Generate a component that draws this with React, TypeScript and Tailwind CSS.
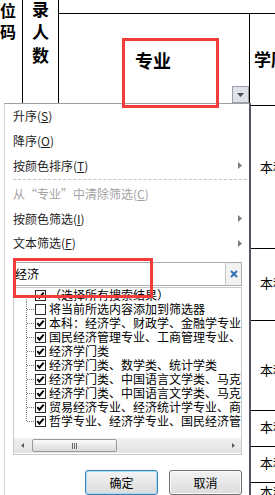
const FONT = "font-['Noto_Sans_CJK_SC','Microsoft_YaHei',sans-serif]"

type Row = { text: string; checked: boolean }

const ROWS: Row[] = [
  { text: '（选择所有搜索结果）', checked: true },
  { text: '将当前所选内容添加到筛选器', checked: false },
  { text: '本科：经济学、财政学、金融学专业、国际经济与贸易专业', checked: true },
  { text: '国民经济管理专业、工商管理专业、会计学专业', checked: true },
  { text: '经济学门类', checked: true },
  { text: '经济学门类、数学类、统计学类', checked: true },
  { text: '经济学门类、中国语言文学类、马克思主义理论类', checked: true },
  { text: '经济学门类、中国语言文学类、马克思主义理论类、法学类', checked: true },
  { text: '贸易经济专业、经济统计学专业、商务经济学专业', checked: true },
  { text: '哲学专业、经济学专业、国民经济管理专业', checked: true },
]

function SubArrow() {
  return (
    <svg width="4" height="7" viewBox="0 0 4 7">
      <path d="M0 0 L4 3.5 L0 7 Z" fill="#7d7d7d" />
    </svg>
  )
}

function CheckBox({ checked }: { checked: boolean }) {
  return (
    <svg width="11" height="11" viewBox="0 0 11 11" className="shrink-0">
      <rect x="0.5" y="0.5" width="10" height="10" fill="white" stroke="#2a2a2a" />
      {checked && <path d="M2.3 5.2 L4.4 7.6 L8.7 2.6" stroke="#000" strokeWidth={2} fill="none" />}
    </svg>
  )
}

function TreeLine({ first, last }: { first: boolean; last: boolean }) {
  return (
    <svg width="21" height="14" viewBox="0 0 21 14" className="shrink-0">
      <line x1="12.5" y1={first ? 7 : 0} x2="12.5" y2={last ? 7.5 : 14} stroke="#7f7f7f" strokeDasharray="1 1" />
      <line x1="13" y1="7.5" x2="21" y2="7.5" stroke="#7f7f7f" strokeDasharray="1 1" />
    </svg>
  )
}

function MenuItem({ children, arrow, disabled, h = 'h-[25px]' }: { children: React.ReactNode; arrow?: boolean; disabled?: boolean; h?: string }) {
  return (
    <div className={`${h} flex items-center justify-between pl-[8px] pr-[7px] text-[12px] whitespace-nowrap ${disabled ? 'text-[#a3a3a3]' : 'text-[#1e1e1e]'}`}>
      <span>{children}</span>
      {arrow && <SubArrow />}
    </div>
  )
}

export default function App() {
  return (
    <div className={`relative w-[275px] h-[495px] overflow-hidden bg-white text-black ${FONT}`}>
      {/* sheet */}
      <div className="flex h-full">
        <div className="w-[23px] shrink-0 border-r border-black flex flex-col text-[16px] font-bold leading-[21px]">
          <span>位</span>
          <span>码</span>
        </div>
        <div className="w-[36px] shrink-0 border-r border-black flex flex-col items-center text-[17px] font-bold leading-[23px] mt-[-3px]">
          <span>录</span>
          <span>人</span>
          <span>数</span>
        </div>
        <div className="flex-1 flex flex-col min-w-0">
          <div className="h-[14px] shrink-0 border-b border-black" />
          <div className="flex flex-1">
            <div className="w-[191px] shrink-0 border-r border-black flex flex-col">
              <div className="pl-[76px] pt-[34px] text-[18px] font-bold leading-[24px]">专业</div>
              <div className="self-end mt-[14px] w-[17px] h-[17px] border border-[#9aa1ab] bg-[#dfe3e8] flex items-center justify-center">
                <svg width="7" height="4" viewBox="0 0 7 4">
                  <path d="M0 0 L7 0 L3.5 4 Z" fill="#4a4f57" />
                </svg>
              </div>
            </div>
            <div className="flex-1 flex flex-col min-w-0 whitespace-nowrap overflow-hidden">
              <div className="h-[92px] shrink-0 border-b border-black pl-[4px] pt-[33px] text-[17px] font-bold leading-[24px]">学历</div>
              <div className="h-[143px] shrink-0 border-b border-black pl-[10px] pt-[53px] text-[13px] leading-[16px]">本科</div>
              <div className="h-[72px] shrink-0 border-b border-black pl-[10px] pt-[26px] text-[13px] leading-[16px]">本科</div>
              <div className="h-[90px] shrink-0 border-b border-black pl-[10px] pt-[41px] text-[13px] leading-[16px]">本科</div>
              <div className="h-[36px] shrink-0 border-b border-black pl-[10px] pt-[8px] text-[13px] leading-[16px]">本科</div>
              <div className="h-[36px] shrink-0 border-b border-black pl-[10px] pt-[8px] text-[13px] leading-[16px]">本科</div>
              <div className="pl-[10px] pt-[1px] text-[13px] leading-[16px]">本科</div>
            </div>
          </div>
        </div>
      </div>

      {/* filter dropdown */}
      <div className="absolute left-[4px] top-[103px] w-[247px] bottom-0 bg-white border-t border-t-[#a0a0a0] border-l border-l-[#d4d4d4] border-r-2 border-r-[#55556a] flex flex-col">
        <MenuItem>升序(<u>S</u>)</MenuItem>
        <MenuItem>降序(<u>O</u>)</MenuItem>
        <MenuItem arrow>按颜色排序(<u>T</u>)</MenuItem>
        <div className="h-[3px] flex items-center ml-[8px] mr-[2px]">
          <div className="w-full border-t border-dashed border-[#c4c4c4]" />
        </div>
        <MenuItem disabled h="h-[26px]">从“专业”中清除筛选(<u>C</u>)</MenuItem>
        <MenuItem arrow>按颜色筛选(<u>I</u>)</MenuItem>
        <MenuItem arrow>文本筛选(<u>F</u>)</MenuItem>

        {/* search */}
        <div className="mt-[6px] ml-[8px] w-[229px] h-[25px] border border-[#abadb3] flex">
          <div className="flex-1 pl-[1px] flex items-center text-[12px]">经济</div>
          <div className="w-[16px] border-l border-[#c8c8c8] bg-[#f2f2f2] flex items-center justify-center">
            <svg width="8" height="8" viewBox="0 0 8 8">
              <path d="M1 1 L7 7 M7 1 L1 7" stroke="#2f6db5" strokeWidth={1.8} />
            </svg>
          </div>
        </div>

        {/* list */}
        <div className="mt-[1px] ml-[8px] w-[229px] h-[170px] border border-[#c9c9c9] flex flex-col">
          <div className="flex-1 overflow-hidden">
            {ROWS.map((r, i) => (
              <div key={i} className="h-[14px] flex items-center whitespace-nowrap text-[12px] leading-[14px]">
                <TreeLine first={i === 0} last={i === ROWS.length - 1} />
                <CheckBox checked={r.checked} />
                <span className="ml-[3px]">{r.text}</span>
              </div>
            ))}
          </div>
          <div className="h-[15px] mb-[1px] bg-gradient-to-b from-[#f0f0f0] to-[#e3e3e3] flex items-center">
            <div className="w-[16px] flex justify-center">
              <svg width="3" height="5" viewBox="0 0 3 5"><path d="M3 0 L0 2.5 L3 5 Z" fill="#5a5a5a" /></svg>
            </div>
            <div className="ml-[2px] w-[85px] h-[13px] rounded-[2px] border border-[#9a9a9a] bg-gradient-to-b from-[#fbfbfb] to-[#dadada] flex items-center justify-center gap-[1px]">
              <div className="w-[1px] h-[6px] bg-[#6a6a6a]" />
              <div className="w-[1px] h-[6px] bg-[#6a6a6a]" />
              <div className="w-[1px] h-[6px] bg-[#6a6a6a]" />
            </div>
            <div className="flex-1" />
            <div className="w-[16px] flex justify-center">
              <svg width="3" height="5" viewBox="0 0 3 5"><path d="M0 0 L3 2.5 L0 5 Z" fill="#5a5a5a" /></svg>
            </div>
          </div>
        </div>

        {/* buttons */}
        <div className="mt-[15px] flex justify-end gap-[11px] pr-[7px]">
          <div className="w-[73px] h-[25px] shrink-0 rounded-[3px] border border-[#3c7fb1] shadow-[inset_0_0_0_1px_#a6dcf8] bg-gradient-to-b from-[#f3f3f3] to-[#dcdcdc] flex items-center justify-center text-[12px]">确定</div>
          <div className="w-[73px] h-[25px] shrink-0 rounded-[3px] border border-[#707070] shadow-[inset_0_0_0_1px_#fafafa] bg-gradient-to-b from-[#f3f3f3] to-[#dcdcdc] flex items-center justify-center text-[12px]">取消</div>
        </div>
      </div>

      {/* red annotation boxes */}
      <div className="absolute left-[122px] top-[38px] w-[97px] h-[70px] border-[3px] border-[#f23b3b] pointer-events-none" />
      <div className="absolute left-[13px] top-[258px] w-[140px] h-[40px] border-[3px] border-[#f23b3b] pointer-events-none" />
    </div>
  )
}
